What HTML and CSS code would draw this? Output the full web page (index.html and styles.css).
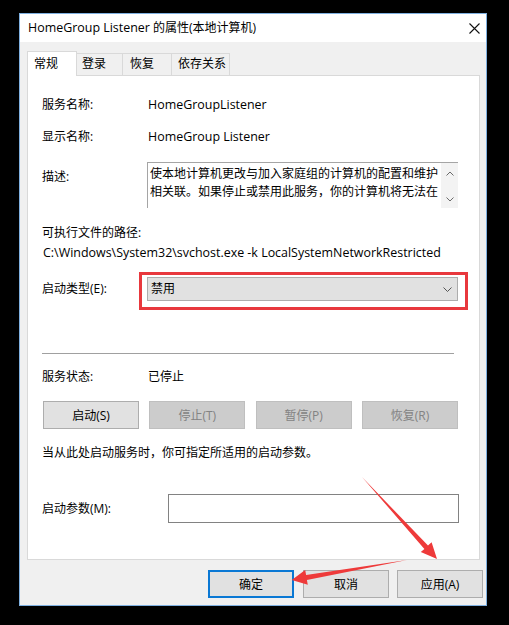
FILE: index.html
```html
<!DOCTYPE html>
<html lang="zh-CN">
<head>
    <meta charset="UTF-8">
    <title>HomeGroup Listener 的属性(本地计算机)</title>
    <link rel="stylesheet" href="styles.css">
</head>
<body>
    <div class="window">
        <!-- Title bar -->
        <div class="titlebar">
            <span class="title"><span class="en">HomeGroup Listener</span> 的属性(本地计算机)</span>
            <svg class="close" width="11" height="11" viewBox="0 0 11 11">
                <path d="M0.5 0.5 L10.5 10.5 M10.5 0.5 L0.5 10.5" stroke="#111" stroke-width="1.1" fill="none"/>
            </svg>
        </div>

        <!-- Tabs -->
        <div class="tabs">
            <div class="tab active">常规</div>
            <div class="tab tab-login">登录</div>
            <div class="tab tab-recover">恢复</div>
            <div class="tab tab-deps">依存关系</div>
        </div>

        <!-- General page -->
        <div class="panel">
            <div class="row">
                <span class="label">服务名称:</span>
                <span class="value en">HomeGroupListener</span>
            </div>
            <div class="row row-gap">
                <span class="label">显示名称:</span>
                <span class="value en">HomeGroup Listener</span>
            </div>
            <div class="row row-desc">
                <span class="label label-top">描述:</span>
                <div class="desc-box">
                    <div class="desc-text">使本地计算机更改与加入家庭组的计算机的配置和维护<br>相关联。如果停止或禁用此服务，你的计算机将无法在</div>
                    <div class="scrollbar">
                        <svg width="8" height="5" viewBox="0 0 8 5"><path d="M0.5 4.5 L4 1 L7.5 4.5" stroke="#6a6a6a" fill="none"/></svg>
                        <svg width="8" height="5" viewBox="0 0 8 5"><path d="M0.5 0.5 L4 4 L7.5 0.5" stroke="#6a6a6a" fill="none"/></svg>
                    </div>
                </div>
            </div>
            <div class="row row-path-label">可执行文件的路径:</div>
            <div class="row row-path en">C:\Windows\System32\svchost.exe -k LocalSystemNetworkRestricted</div>
            <div class="row row-select">
                <span class="label">启动类型(E):</span>
                <div class="select">
                    <span>禁用</span>
                    <svg width="9" height="5" viewBox="0 0 9 5"><path d="M0.5 0.5 L4.5 4.5 L8.5 0.5" stroke="#555" fill="none"/></svg>
                    <div class="highlight"></div>
                </div>
            </div>

            <div class="separator"></div>

            <div class="row row-status">
                <span class="label">服务状态:</span>
                <span class="value">已停止</span>
            </div>
            <div class="service-buttons">
                <button class="btn">启动(S)</button>
                <button class="btn" disabled>停止(T)</button>
                <button class="btn" disabled>暂停(P)</button>
                <button class="btn" disabled>恢复(R)</button>
            </div>
            <div class="row row-hint">当从此处启动服务时，你可指定所适用的启动参数。</div>
            <div class="row row-param">
                <span class="label label-wide">启动参数(M):</span>
                <div class="param-input"></div>
            </div>
        </div>

        <!-- Dialog buttons -->
        <div class="footer">
            <button class="btn btn-default">确定</button>
            <button class="btn btn-cancel">取消</button>
            <button class="btn">应用(A)</button>
        </div>
    </div>

    <!-- Annotation arrows -->
    <svg class="arrows" width="509" height="625" viewBox="0 0 509 625">
        <polygon points="362,477 428,545.5 431.6,542.3 437,559 420.8,552 424.4,548.9" fill="#ee3a3a"/>
        <polygon points="407,560 306.1,574.9 305.2,570 291.7,580 307.8,584.8 306.9,579.9" fill="#ee3a3a"/>
    </svg>
</body>
</html>
```

FILE: styles.css
```css
body {
    background-color: #000;
    font-family: 'Open Sans', 'Noto Sans CJK SC', sans-serif;
    font-size: 12px;
    line-height: 16px;
    color: #000;
    margin: 0;
    position: relative;
    width: 509px;
    height: 625px;
    overflow: hidden;
}

/* latin runs are a bit wider in the original UI font */
.en {
    font-size: 12.45px;
}

.window {
    box-sizing: border-box;
    margin: 13px 0 0 19px;
    width: 468px;
    height: 593px;
    border: 1px solid #7fb0e0;
    background: #f0f0f0;
}

.titlebar {
    height: 28px;
    background: #fff;
    display: flex;
    align-items: center;
    justify-content: space-between;
    padding: 0 6px 0 8px;
}

/* Tabs */
.tabs {
    display: flex;
    align-items: flex-end;
    height: 24px;
    margin-top: 9px;
    padding-left: 7px;
}

.tab {
    box-sizing: border-box;
    height: 22px;
    line-height: 20px;
    padding-left: 6px;
    background: #f0f0f0;
    border: 1px solid #d9d9d9;
    border-left: none;
    border-bottom: none;
}

.tab.active {
    width: 50px;
    height: 25px;
    line-height: 24px;
    margin-bottom: -1px;
    padding-left: 6px;
    background: #fff;
    border-left: 1px solid #d9d9d9;
    position: relative;
    z-index: 1;
}

.tab-login { width: 46px; padding-left: 5px; }
.tab-recover { width: 49px; padding-left: 7px; }
.tab-deps { width: 58px; padding-left: 6px; }

/* Panel */
.panel {
    box-sizing: border-box;
    margin-left: 7px;
    width: 453px;
    height: 485px;
    background: #fff;
    border: 1px solid #d9d9d9;
    padding: 21px 0 0 14px;
}

.row {
    display: flex;
    align-items: center;
    height: 16px;
}

.label {
    width: 105px;
    flex-shrink: 0;
}

.label-wide {
    width: 126px;
}

.value {
    padding-left: 1px;
}

.row-gap { margin-top: 16px; }

.row-desc {
    margin-top: 17px;
    height: 46px;
    align-items: flex-start;
}

.label-top {
    margin-top: 7px;
}

.desc-box {
    box-sizing: border-box;
    width: 311px;
    height: 46px;
    border-top: 1px solid #a5a5a5;
    border-left: 1px solid #a5a5a5;
    display: flex;
}

.desc-text {
    flex: 1;
    padding: 2px 0 0 2px;
    line-height: 18px;
    white-space: nowrap;
    overflow: hidden;
}

.scrollbar {
    width: 17px;
    background: #f3f3f3;
    display: flex;
    flex-direction: column;
    align-items: center;
    justify-content: space-between;
    padding: 8px 0 6px;
}

.row-path-label { margin-top: 17px; }
.row-path { margin-top: 4px; padding-left: 1px; }

.row-select {
    margin-top: 16px;
    height: 24px;
}

.select {
    position: relative;
    box-sizing: border-box;
    width: 311px;
    height: 24px;
    background: #e1e1e1;
    border: 1px solid #adadad;
    display: flex;
    align-items: center;
    justify-content: space-between;
    padding: 0 5px 0 3px;
}

.highlight {
    position: absolute;
    box-sizing: border-box;
    left: -9px;
    top: -6px;
    width: 329px;
    height: 38px;
    border: 3px solid #e8383d;
}

.separator {
    margin-top: 52px;
    width: 412px;
    height: 1px;
    background: #a0a0a0;
}

.row-status { margin-top: 15px; }

.service-buttons {
    margin: 16px 0 0 1px;
    width: 415px;
    display: grid;
    grid-template-columns: repeat(4, 1fr);
    column-gap: 10.33px;
}

.btn {
    box-sizing: border-box;
    height: 28px;
    font-family: inherit;
    font-size: 12px;
    color: #000;
    background: #e1e1e1;
    border: 1px solid #adadad;
    padding: 0;
}

.btn:disabled {
    background: #cccccc;
    border-color: #bfbfbf;
    color: #838383;
}

.row-hint { margin-top: 16px; }

.row-param {
    margin-top: 33px;
    height: 29px;
}

.param-input {
    box-sizing: border-box;
    width: 291px;
    height: 29px;
    border: 1px solid #828282;
    background: #fff;
}

/* Dialog buttons */
.footer {
    display: flex;
    justify-content: flex-end;
    margin-top: 10px;
    padding-right: 3px;
}

.footer .btn {
    width: 86px;
}

.btn-default {
    border: 2px solid #0a78d4;
    margin-right: 9px;
}

.btn-cancel {
    margin-right: 8px;
}

.arrows {
    position: absolute;
    left: 0;
    top: 0;
    pointer-events: none;
}
```
